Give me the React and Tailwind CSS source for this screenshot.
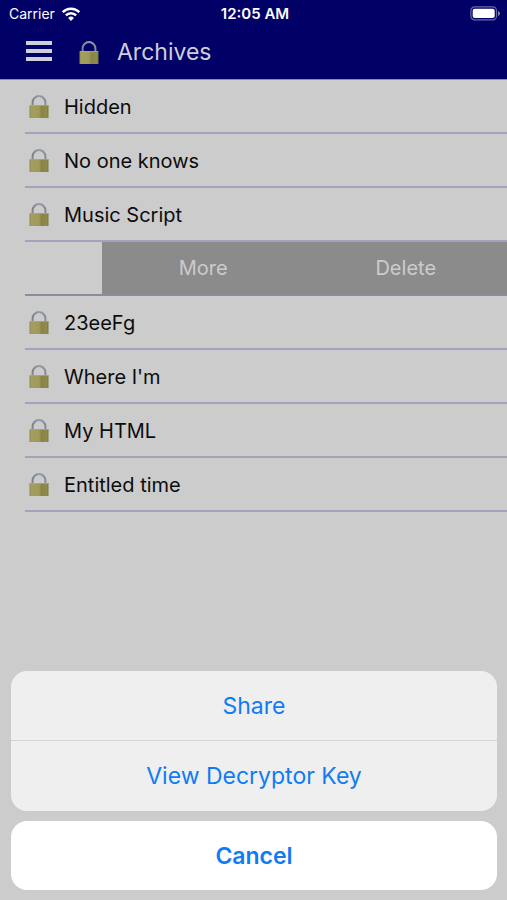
import React, { useId } from 'react';

const archives = [
  { id: 1, name: 'Hidden' },
  { id: 2, name: 'No one knows' },
  { id: 3, name: 'Music Script' },
  { id: 4, swiped: true },
  { id: 5, name: '23eeFg' },
  { id: 6, name: "Where I'm" },
  { id: 7, name: 'My HTML' },
  { id: 8, name: 'Entitled time' },
];

const LockIcon = ({ className }) => {
  const id = useId();
  return (
    <svg viewBox="0 0 20 24" className={className} aria-hidden="true">
      <defs>
        <linearGradient id={`${id}-body`} x1="0" x2="1" y1="0" y2="0">
          <stop offset="0" stopColor="#8f8a4e" />
          <stop offset="0.1" stopColor="#a39d5e" />
          <stop offset="0.5" stopColor="#a09a5a" />
          <stop offset="0.62" stopColor="#8a8448" />
          <stop offset="0.9" stopColor="#8f894c" />
          <stop offset="1" stopColor="#7d7740" />
        </linearGradient>
        <linearGradient id={`${id}-shackle`} x1="0" x2="1" y1="0" y2="0">
          <stop offset="0" stopColor="#7c838b" />
          <stop offset="0.5" stopColor="#959da6" />
          <stop offset="1" stopColor="#858c96" />
        </linearGradient>
      </defs>
      <path
        d="M3.6 11V7.500a6.400 6.400 0 0 1 12.800 0V11"
        fill="none"
        stroke={`url(#${id}-shackle)`}
        strokeWidth="2"
      />
      <rect x="0.5" y="10" width="19" height="13" rx="0.6" fill={`url(#${id}-body)`} />
      <path d="M1 10.500h18" stroke="#b3ad72" strokeWidth="0.7" />
    </svg>
  );
};

const WifiIcon = () => (
  <svg viewBox="0 0 20 15" className="w-5 h-4" aria-hidden="true">
    <g fill="none" stroke="#fff" strokeWidth="2.6">
      <path d="M1.7 5.6a11.8 11.8 0 0 1 16.6 0" />
      <path d="M4.9 8.9a7.2 7.2 0 0 1 10.2 0" />
    </g>
    <path d="M10 14.4 7.1 11.4a4.1 4.1 0 0 1 5.8 0Z" fill="#fff" />
  </svg>
);

const BatteryIcon = () => (
  <svg viewBox="0 0 31 15" className="w-[31px] h-[15px]" aria-hidden="true">
    <rect x="0.9" y="0.9" width="25.6" height="13" rx="3.8" fill="none" stroke="#6a6aa8" strokeWidth="1.2" />
    <rect x="2.7" y="2.7" width="22" height="9.4" rx="2" fill="#fff" />
    <path d="M28 5v5c1.2-.4 2-1.4 2-2.5S29.200 5.400 28 5Z" fill="#7f7fb5" />
  </svg>
);

const StatusBar = () => (
  <div className="grid grid-cols-3 items-center h-7 pl-[9px] pr-1.5 pb-px text-sm text-white">
    <div className="flex items-center gap-1.5">
      <span>Carrier</span>
      <WifiIcon />
    </div>
    <span className="text-center text-[15px] font-semibold">12:05 AM</span>
    <div className="flex justify-end">
      <BatteryIcon />
    </div>
  </div>
);

const ArchiveRow = ({ name }) => (
  <li className="flex items-center h-[54px] ml-[25px] pl-1 pt-px border-b-2 border-[#a3a3bd]">
    <LockIcon className="w-5 h-6" />
    <span className="ml-[15px] text-xl text-[#0c0c0c]">{name}</span>
  </li>
);

const SwipedRow = () => (
  <li className="flex h-[54px] ml-[25px] border-b-2 border-[#8b8ba5] text-xl text-[#cbcbcb]">
    <div className="w-[77px]" />
    <button type="button" className="flex-1 bg-[#8b8b8c]">More</button>
    <button type="button" className="flex-1 bg-[#8b8b8c]">Delete</button>
  </li>
);

const ActionSheet = () => (
  <div className="mt-auto flex flex-col gap-2.5 pl-[11px] pr-2.5 pb-2.5 text-[23px] text-[#0f7bf5]">
    <div className="flex flex-col rounded-2xl overflow-hidden bg-[#efefef]">
      <button type="button" className="h-[70px] pt-0.5 border-b border-[#d4d4d4]">Share</button>
      <button type="button" className="h-[70px]">View Decryptor Key</button>
    </div>
    <button type="button" className="h-[69px] pt-0.5 rounded-2xl bg-white font-semibold">Cancel</button>
  </div>
);

const App = () => {
  return (
    <div className="flex flex-col min-h-screen bg-[#cccccc] font-['Inter',sans-serif]">
      <header className="border-b border-[#8a8ab8] bg-[#000066]">
        <StatusBar />
        <div className="flex items-center h-[51px] pl-[26px] pb-1.5">
          <button type="button" aria-label="Menu" className="flex flex-col gap-1 w-[26px]">
            <span className="h-[4px] bg-[#d0d0dc]" />
            <span className="h-[4px] bg-[#d0d0dc]" />
            <span className="h-[4px] bg-[#d0d0dc]" />
          </button>
          <LockIcon className="w-5 h-6 mt-1 ml-[27px]" />
          <h1 className="mt-1 ml-[18px] text-[23px] text-[#cfcfdc]">Archives</h1>
        </div>
      </header>

      <ul>
        {archives.map((item) =>
          item.swiped ? <SwipedRow key={item.id} /> : <ArchiveRow key={item.id} name={item.name} />
        )}
      </ul>

      <ActionSheet />
    </div>
  );
};

export default App;
